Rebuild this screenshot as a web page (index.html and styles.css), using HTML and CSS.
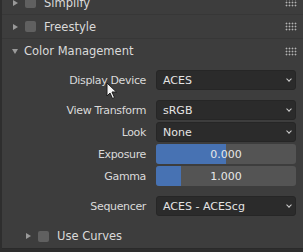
FILE: index.html
```html
<!DOCTYPE html>
<html>
  <head>
    <meta charset="utf-8" />
    <title>Color Management</title>
    <link rel="stylesheet" href="styles.css">
  </head>
  <body>
    <div class="panels">
      <div class="panel-head">
        <span class="arrow arrow-right"></span>
        <span class="check"></span>
        <span class="head-title">Simplify</span>
        <span class="grip"></span>
      </div>
      <div class="panel-head">
        <span class="arrow arrow-right"></span>
        <span class="check"></span>
        <span class="head-title">Freestyle</span>
        <span class="grip"></span>
      </div>
      <div class="panel-head open">
        <span class="arrow arrow-down"></span>
        <span class="head-title">Color Management</span>
        <span class="grip"></span>
      </div>

      <div class="panel-body">
        <div class="prop">
          <label>Display Device</label>
          <div class="menu">ACES</div>
        </div>

        <div class="prop gap">
          <label>View Transform</label>
          <div class="menu">sRGB</div>
        </div>
        <div class="prop">
          <label>Look</label>
          <div class="menu">None</div>
        </div>
        <div class="prop">
          <label>Exposure</label>
          <div class="slider"><div class="fill" style="width: 50%"></div><span>0.000</span></div>
        </div>
        <div class="prop">
          <label>Gamma</label>
          <div class="slider"><div class="fill" style="width: 18%"></div><span>1.000</span></div>
        </div>

        <div class="prop gap">
          <label>Sequencer</label>
          <div class="menu">ACES - ACEScg</div>
        </div>

        <div class="sub-head">
          <span class="arrow arrow-right"></span>
          <span class="check"></span>
          <span class="head-title">Use Curves</span>
        </div>
      </div>
    </div>

    <!-- mouse pointer over the panel -->
    <svg class="cursor" width="12" height="18" viewBox="0 0 12 18">
      <path d="M1 1 L1 14 L4 11 L6.5 16.5 L8.5 15.5 L6 10 L10.5 10 Z"
        fill="#f2f2f2" stroke="#1a1a1a" stroke-width="1" stroke-linejoin="round" />
    </svg>
  </body>
</html>
```

FILE: styles.css
```css
body {
  margin: 0;
  background: #2e2e2e;
  font-family: "DejaVu Sans", Verdana, sans-serif;
  font-size: 11px;
  color: #dcdcdc;
  overflow: hidden;
}

.panels {
  margin-top: -9px;
  margin-left: 2px;
  background: #3d3d3d;
}

/**
 * Collapsible panel headers
 */
.panel-head,
.sub-head {
  display: flex;
  align-items: center;
  height: 24px;
  padding-left: 11px;
  padding-right: 7px;
  border-bottom: 1px solid #373737;
  box-sizing: border-box;
  font-size: 11.5px;
}

.panel-head.open {
  border-bottom: none;
}

.head-title {
  flex: 1;
  color: #dadada;
}

.arrow {
  width: 0;
  height: 0;
  margin-right: 7px;
}

.arrow-right {
  border-top: 3px solid transparent;
  border-bottom: 3px solid transparent;
  border-left: 5px solid #9a9a9a;
}

.arrow-down {
  border-left: 3px solid transparent;
  border-right: 3px solid transparent;
  border-top: 5px solid #9a9a9a;
  margin-right: 6px;
  margin-left: -1px;
}

.check {
  width: 11px;
  height: 11px;
  border-radius: 2px;
  background: #606060;
  margin-right: 8px;
}

.grip {
  width: 12px;
  height: 9px;
  margin-right: -1px;
  background-image: radial-gradient(circle, #b4b4b4 0.8px, transparent 1.1px);
  background-size: 3px 3px;
}

/**
 * Properties
 */
.panel-body {
  padding: 7px 7px 0 0;
  border-bottom: 1px solid #2a2a2a;
}

.prop {
  display: flex;
  align-items: center;
  height: 20px;
  margin-bottom: 2px;
}

.prop.gap {
  margin-top: 10px;
}

.prop label {
  width: 144px;
  text-align: right;
  padding-right: 10px;
  color: #dadada;
  letter-spacing: -0.35px;
}

.menu {
  flex: 1;
  height: 20px;
  line-height: 20px;
  box-sizing: border-box;
  background: #2b2b2b;
  border: 1px solid #262626;
  border-radius: 3px;
  padding-left: 6px;
  color: #e4e4e4;
  position: relative;
}

.menu::after {
  content: "";
  position: absolute;
  right: 4px;
  top: 6px;
  width: 3px;
  height: 3px;
  border-right: 1.5px solid #cfcfcf;
  border-bottom: 1.5px solid #cfcfcf;
  transform: rotate(45deg);
}

.slider {
  flex: 1;
  height: 20px;
  background: #545454;
  border-radius: 3px;
  position: relative;
  overflow: hidden;
  display: flex;
  align-items: center;
  justify-content: center;
}

.slider .fill {
  position: absolute;
  left: 0;
  top: 0;
  bottom: 0;
  background: #4772b3;
}

.slider span {
  position: relative;
  color: #e8e8e8;
}

.sub-head {
  margin-top: 8px;
  padding-left: 24px;
  border-bottom: none;
}

.cursor {
  position: absolute;
  left: 106px;
  top: 82px;
}
```
